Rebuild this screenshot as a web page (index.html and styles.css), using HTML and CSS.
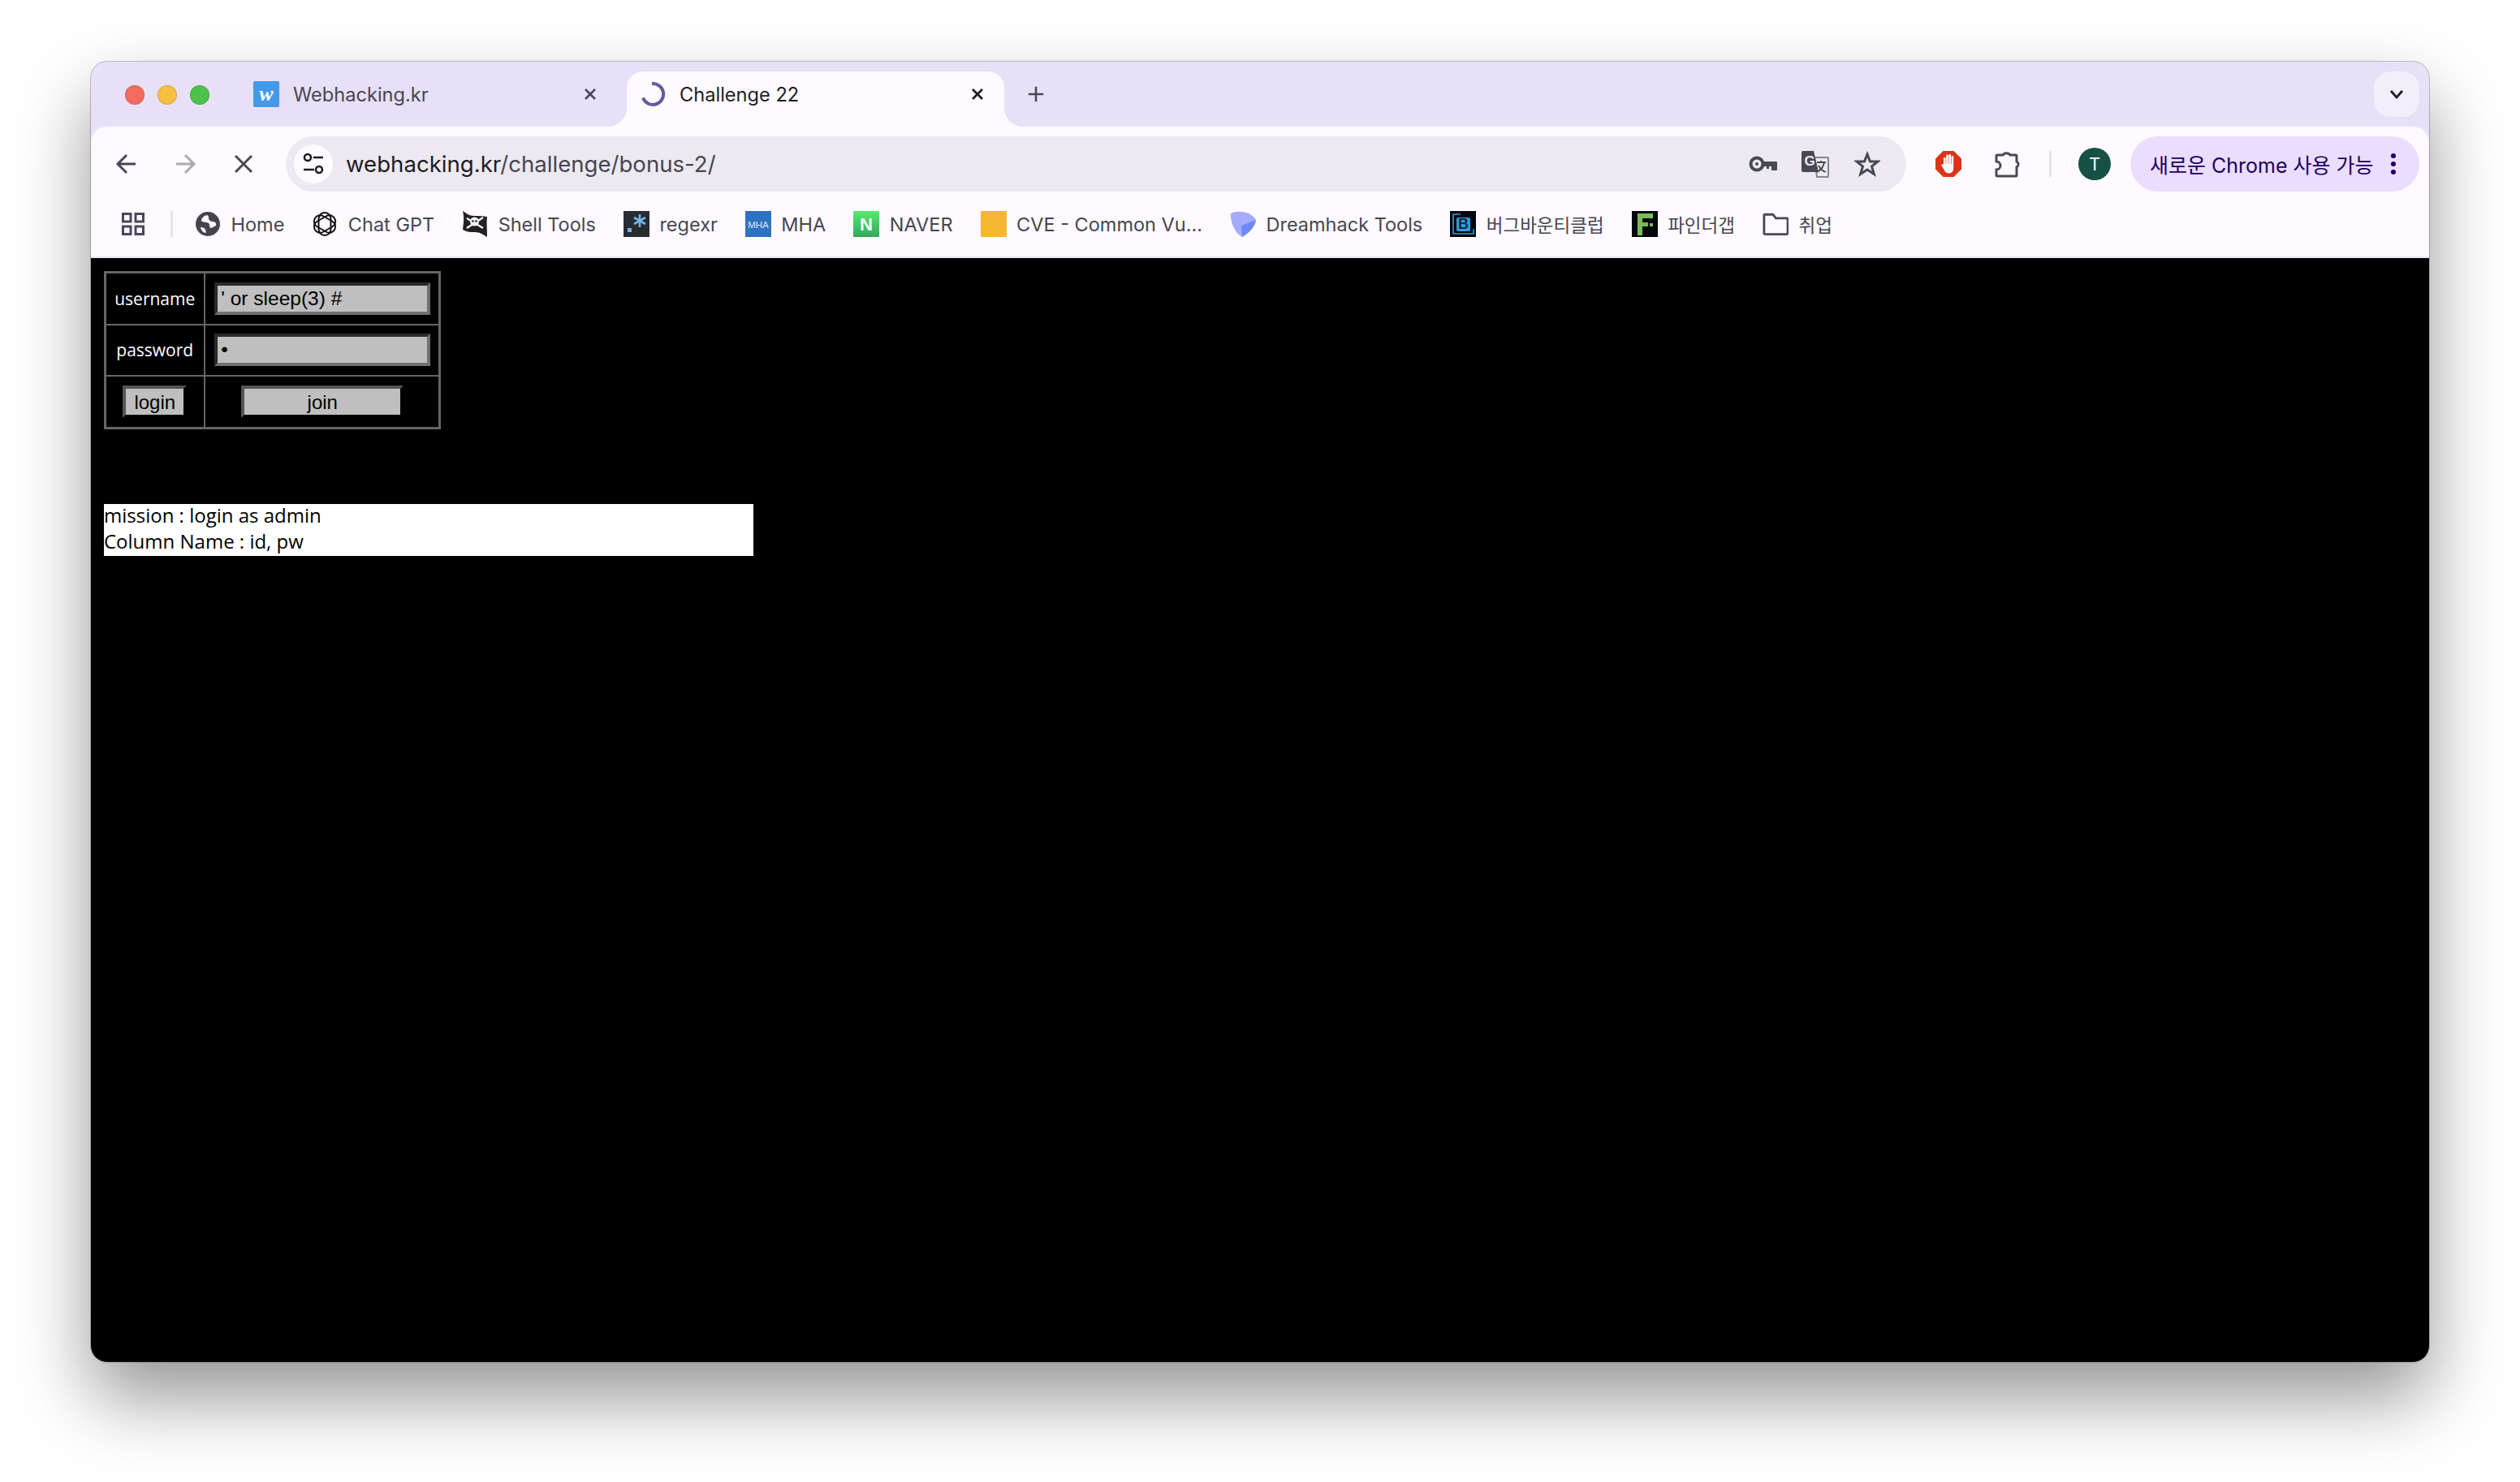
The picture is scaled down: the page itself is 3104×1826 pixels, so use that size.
FILE: index.html
```html
<!DOCTYPE html>
<html lang="ko">
<head>
  <meta charset="UTF-8">
  <title>Challenge 22</title>
  <link rel="stylesheet" href="styles.css">
</head>
<body>
  <div class="window">
    <!-- Tabs -->
    <div class="tabstrip">
      <div class="lights">
        <span class="light light-red"></span>
        <span class="light light-yellow"></span>
        <span class="light light-green"></span>
      </div>
      <div class="tab">
        <svg class="favicon" viewBox="0 0 32 32"><rect y="0" width="32" height="32" rx="2" fill="#4499ea"/><text x="16" y="24" text-anchor="middle" class="fav-w">w</text></svg>
        <span class="tab-title">Webhacking.kr</span>
        <svg class="tab-close" viewBox="0 0 18 18"><path d="M3 3l12 12M15 3L3 15" stroke="#4a4855" stroke-width="2.6" fill="none"/></svg>
      </div>
      <div class="tab tab-active">
        <svg class="favicon" viewBox="0 0 32 32"><path d="M13 3a13 13 0 1 1-11 17.500" stroke="#675a9e" stroke-width="4" fill="none"/></svg>
        <span class="tab-title">Challenge 22</span>
        <svg class="tab-close" viewBox="0 0 18 18"><path d="M3 3l12 12M15 3L3 15" stroke="#1e1c24" stroke-width="2.8" fill="none"/></svg>
      </div>
      <svg class="new-tab" viewBox="0 0 24 24"><path d="M12 2v20M2 12h20" stroke="#4a4855" stroke-width="2.8" fill="none"/></svg>
      <div class="tab-search">
        <svg viewBox="0 0 18 12" class="chevron"><path d="M2 2l7 8 7-8" stroke="#1e1c24" stroke-width="2.8" fill="none"/></svg>
      </div>
    </div>

    <!-- Toolbar -->
    <div class="toolbar">
      <div class="nav-btn">
        <svg viewBox="0 0 28 28" class="nav-icon"><path d="M25 14H4M14 3L3 14l11 11" stroke="#4a4855" stroke-width="3" fill="none"/></svg>
      </div>
      <div class="nav-btn">
        <svg viewBox="0 0 28 28" class="nav-icon"><path d="M3 14h21M14 3l11 11-11 11" stroke="#aaa8b1" stroke-width="3" fill="none"/></svg>
      </div>
      <div class="nav-btn">
        <svg viewBox="0 0 28 28" class="nav-icon"><path d="M4 4l20 20M24 4L4 24" stroke="#4a4855" stroke-width="3" fill="none"/></svg>
      </div>
      <div class="omnibox">
        <div class="site-info">
          <svg viewBox="0 0 28 28" class="tune"><circle cx="7" cy="6" r="4" stroke="#1e1c24" stroke-width="2.6" fill="none"/><path d="M14 6h12M2 21h13" stroke="#1e1c24" stroke-width="2.6"/><circle cx="21" cy="21" r="4" stroke="#1e1c24" stroke-width="2.6" fill="none"/></svg>
        </div>
        <div class="url"><span class="url-host">webhacking.kr</span>/challenge/bonus-2/</div>
        <div class="omni-btn">
          <svg viewBox="0 0 36 20" class="key"><circle cx="10" cy="10" r="7.500" stroke="#4a4855" stroke-width="4" fill="none"/><circle cx="10" cy="10" r="2" fill="#4a4855"/><path d="M17 7h17a1 1 0 0 1 1 1v9a1 1 0 0 1-1 1h-6v-5h-3v3h-3v-3h-5z" fill="#4a4855"/></svg>
        </div>
        <div class="omni-btn">
          <svg viewBox="0 0 34 34" class="translate"><path d="M16 9h16a1 1 0 0 1 1 1v22a1 1 0 0 1-1 1H19z" fill="#ece9f1" stroke="#85838c" stroke-width="2"/><path d="M2 1h13l6 26H2a2 2 0 0 1-2-2V3a2 2 0 0 1 2-2z" fill="#4a4855"/><text x="10" y="19" text-anchor="middle" class="tr-g">G</text><path d="M19 15h11M24 13v2M28 15c-1 6-5 10-9 12M21 19c2 4 5 7 9 8" stroke="#4a4855" stroke-width="1.800" fill="none"/></svg>
        </div>
        <div class="omni-btn">
          <svg viewBox="0 0 32 32" class="star"><path d="M16 4l3.500 9h9.500l-7.500 6 2.800 9.500L16 23l-8.300 5.500 2.800-9.500-7.500-6h9.500z" stroke="#4a4855" stroke-width="3" fill="none"/></svg>
        </div>
      </div>
      <div class="nav-btn nav-first">
        <svg viewBox="0 0 32 32" class="ext-icon"><path d="M9.500 0h13L32 9.500v13L22.500 32h-13L0 22.500v-13z" fill="#dd3418"/><g fill="#fff"><rect x="10" y="8" width="2.600" height="11" rx="1.300"/><rect x="13.200" y="4.500" width="2.600" height="13" rx="1.300"/><rect x="16.400" y="4" width="2.600" height="13" rx="1.300"/><rect x="19.600" y="6" width="2.600" height="12" rx="1.300"/><path d="M10 16h12.200v5c0 4-2 6.500-5.700 6.500-3 0-4.500-1.500-6-4.500l-3-5c-.6-1.300 1-2.300 2-1.200z"/></g></svg>
      </div>
      <div class="nav-btn">
        <svg viewBox="0 0 32 34" class="ext-icon"><path d="M4 6h7a5 4 0 0 1 9 0h7a1 1 0 0 1 1 1v7a4 4 0 0 1 0 7v10a1 1 0 0 1-1 1H4a1 1 0 0 1-1-1v-7a5 5 0 0 0 0-10V7a1 1 0 0 1 1-1z" stroke="#4a4855" stroke-width="3" fill="none"/></svg>
      </div>
      <span class="toolbar-sep"></span>
      <div class="avatar">T</div>
      <div class="update-pill">
        <span class="update-text">새로운 Chrome 사용 가능</span>
        <svg viewBox="0 0 8 28" class="dots"><circle cx="4" cy="4" r="3"/><circle cx="4" cy="14" r="3"/><circle cx="4" cy="24" r="3"/></svg>
      </div>
    </div>

    <!-- Bookmarks -->
    <div class="bookmarks">
      <svg viewBox="0 0 28 28" class="apps"><g fill="none" stroke="#4a4855" stroke-width="3"><rect x="1.500" y="1.500" width="9.500" height="9.500"/><rect x="17" y="1.500" width="9.500" height="9.500"/><rect x="1.500" y="17" width="9.500" height="9.500"/><rect x="17" y="17" width="9.500" height="9.500"/></g></svg>
      <span class="bm-sep"></span>
      <div class="bm-list">
        <div class="bm">
          <svg viewBox="0 0 32 32" class="bm-icon"><circle cx="16" cy="16" r="15" fill="#46444f"/><path d="M15 5c-4 1-7 4-7 7 2 3 6 1 9 3 2 2 0 5 3 6l6-3c1-3-1-5-4-5-3 0-5-2-5-4 0-2 0-3-2-4zM7 20c3 0 5 1 6 3 1 2 0 3 1 4-4 0-6-3-7-7z" fill="#fefaff"/></svg>
          <span>Home</span>
        </div>
        <div class="bm">
          <svg viewBox="0 0 32 32" class="bm-icon"><g fill="none" stroke="#111" stroke-width="2"><rect x="8.500" y="2" width="15" height="28" rx="7.500"/><rect x="8.500" y="2" width="15" height="28" rx="7.500" transform="rotate(60 16 16)"/><rect x="8.500" y="2" width="15" height="28" rx="7.500" transform="rotate(120 16 16)"/></g></svg>
          <span>Chat GPT</span>
        </div>
        <div class="bm">
          <svg viewBox="0 0 32 32" class="bm-icon"><path d="M1 0c5 3 8 6 14 6s10 0 16 1c-1 7 0 15 0 25-5-3-9-6-15-6-5 0-10 0-15-3 1-7 2-15 0-23z" fill="#222"/><circle cx="15.500" cy="13" r="5.500" fill="#f4f4f4"/><path d="M6 9l20 12M26 8L6 21" stroke="#f4f4f4" stroke-width="2.400"/><circle cx="13.500" cy="12.500" r="1.300" fill="#222"/><circle cx="17.500" cy="12.500" r="1.300" fill="#222"/></svg>
          <span>Shell Tools</span>
        </div>
        <div class="bm">
          <svg viewBox="0 0 32 32" class="bm-icon"><rect width="32" height="32" fill="#272c30"/><rect x="5" y="21" width="5" height="5" fill="#70b6ea"/><path d="M20 4v16M13 8l14 8M27 8l-14 8" stroke="#70b6ea" stroke-width="2.600"/></svg>
          <span>regexr</span>
        </div>
        <div class="bm">
          <svg viewBox="0 0 32 32" class="bm-icon"><rect width="32" height="32" fill="#2f72c2"/><text x="16" y="21" text-anchor="middle" class="fav-mha">MHA</text></svg>
          <span>MHA</span>
        </div>
        <div class="bm">
          <svg viewBox="0 0 32 32" class="bm-icon"><defs><linearGradient id="nv" x1="0" y1="0" x2="0" y2="1"><stop offset="0" stop-color="#55ea6e"/><stop offset="1" stop-color="#33a85b"/></linearGradient></defs><rect width="32" height="32" rx="1" fill="url(#nv)"/><text x="16" y="24" text-anchor="middle" class="fav-n">N</text></svg>
          <span>NAVER</span>
        </div>
        <div class="bm">
          <svg viewBox="0 0 32 32" class="bm-icon"><rect width="32" height="32" fill="#f5b731"/></svg>
          <span>CVE - Common Vu...</span>
        </div>
        <div class="bm">
          <svg viewBox="0 0 32 32" class="bm-icon"><path d="M1 3C10-1 25 0 32 11c-1 9-10 17-17 21C7 28 0 14 1 3z" fill="#a4acfb"/><path d="M32 11c-1 9-10 17-17 21l-1-14z" fill="#6f87fb"/></svg>
          <span>Dreamhack Tools</span>
        </div>
        <div class="bm">
          <svg viewBox="0 0 32 32" class="bm-icon"><rect width="32" height="32" fill="#03060a"/><path d="M13 4H4v24h25v-6" stroke="#2d9ee0" stroke-width="1.600" fill="none"/><rect x="8" y="8" width="17" height="17" rx="2" fill="#2d9ee0"/><text x="16.500" y="22" text-anchor="middle" class="fav-b">B</text></svg>
          <span class="bm-ko">버그바운티클럽</span>
        </div>
        <div class="bm">
          <svg viewBox="0 0 32 32" class="bm-icon"><rect width="32" height="32" fill="#03060a"/><path d="M7 3h19v6H13v5h7v5h-7v11H7z" fill="#7dbb5a"/><rect x="22" y="15" width="4" height="4" fill="#7dbb5a"/></svg>
          <span class="bm-ko">파인더갭</span>
        </div>
        <div class="bm">
          <svg viewBox="0 0 34 32" class="bm-icon"><path d="M2 5a1.500 1.500 0 0 1 1.500-1.500h10l4 5h14A1.500 1.500 0 0 1 33 10v18a1.500 1.500 0 0 1-1.500 1.500h-28A1.500 1.500 0 0 1 2 28z" stroke="#4a4855" stroke-width="3" fill="none"/></svg>
          <span class="bm-ko">취업</span>
        </div>
      </div>
    </div>

    <!-- Page -->
    <div class="page">
      <form class="login-form">
        <table class="login-table">
          <tr>
            <td class="cell-label">username</td>
            <td class="cell-field"><input type="text" value="' or sleep(3) #"></td>
          </tr>
          <tr>
            <td class="cell-label">password</td>
            <td class="cell-field"><input type="password" value="a"></td>
          </tr>
          <tr>
            <td class="cell-label"><button type="button" class="btn-login">login</button></td>
            <td class="cell-field"><button type="button" class="btn-join">join</button></td>
          </tr>
        </table>
      </form>
      <div class="mission">
        <div class="mission-text">
          mission : login as admin<br>
          Column Name : id, pw
        </div>
      </div>
    </div>
  </div>
</body>
</html>
```

FILE: styles.css
```css
/* Base */
* {
  box-sizing: border-box;
}

html, body {
  margin: 0;
  height: 1826px;
  overflow: hidden;
  background: #fff;
}

body {
  font-family: Inter, "Noto Sans CJK KR", sans-serif;
  padding: 76px 112px 0;
}

.window {
  height: 1602px;
  display: flex;
  flex-direction: column;
  background: #e8e0f6;
  border-radius: 20px;
  overflow: hidden;
}

body::before {
  content: "";
  position: absolute;
  left: 112px;
  top: 76px;
  width: 2880px;
  height: 1602px;
  border-radius: 20px;
  box-shadow: 0 0 0 1px rgba(0, 0, 0, 0.22), 0 44px 90px rgba(0, 0, 0, 0.42);
}

/* Tab strip */
.tabstrip {
  height: 80px;
  padding: 12px 12px 0 42px;
  display: flex;
  align-items: flex-start;
  flex-shrink: 0;
  position: relative;
}

.lights {
  display: flex;
  gap: 16px;
  margin-top: 17px;
  margin-right: 37px;
}

.light {
  width: 24px;
  height: 24px;
  border-radius: 50%;
  border: 1px solid rgba(0, 0, 0, 0.12);
}

.light-red { background: #f46c5e; }
.light-yellow { background: #f7bf40; }
.light-green { background: #4cc24b; }

.tab {
  width: 465px;
  height: 68px;
  padding: 0 24px 12px 17px;
  display: flex;
  align-items: center;
  color: #474550;
  font-size: 23.6px;
  position: relative;
}

.tab-active {
  margin-left: 12px;
  background: #fefaff;
  color: #1e1c24;
  border-radius: 20px 20px 0 0;
  z-index: 1;
}

.tab-active .tab-title {
  margin-left: 15px;
}

.tab-active .favicon {
  margin-left: 1px;
}

.tab-active::before,
.tab-active::after {
  content: "";
  position: absolute;
  bottom: 0;
  width: 24px;
  height: 24px;
}

.tab-active::before {
  left: -24px;
  background: radial-gradient(circle at 0 0, transparent 24px, #fefaff 24.5px);
}

.tab-active::after {
  right: -24px;
  background: radial-gradient(circle at 100% 0, transparent 24px, #fefaff 24.5px);
}

.favicon {
  width: 32px;
  height: 32px;
  flex-shrink: 0;
}

.tab-title {
  flex: 1;
  margin-left: 17px;
  white-space: nowrap;
}

.tab-close {
  width: 18px;
  height: 18px;
}

.fav-w {
  font-family: "Liberation Serif", serif;
  font-style: italic;
  font-weight: 700;
  font-size: 26px;
  fill: #fff;
}

.new-tab {
  width: 22px;
  height: 22px;
  margin: 17px 0 0 28px;
}

.tab-search {
  width: 56px;
  height: 56px;
  margin-left: auto;
  background: #f3edfc;
  border-radius: 20px;
  display: flex;
  align-items: center;
  justify-content: center;
}

.chevron {
  width: 18px;
  height: 12px;
}

/* Toolbar */
.toolbar {
  height: 92px;
  padding: 12px 12px 12px 8px;
  background: #fefaff;
  border-radius: 20px 20px 0 0;
  display: flex;
  align-items: center;
  flex-shrink: 0;
}

.nav-btn {
  width: 72px;
  height: 68px;
  display: flex;
  align-items: center;
  justify-content: center;
  flex-shrink: 0;
}

.nav-first {
  margin-left: 16px;
}

.nav-icon {
  width: 28px;
  height: 28px;
}

.omnibox {
  width: 1996px;
  height: 68px;
  margin-left: 16px;
  padding: 0 16px 0 10px;
  background: #ece9f1;
  border-radius: 34px;
  display: flex;
  align-items: center;
  flex-shrink: 0;
}

.site-info {
  width: 48px;
  height: 48px;
  background: #fefaff;
  border-radius: 50%;
  display: flex;
  align-items: center;
  justify-content: center;
}

.tune {
  width: 28px;
  height: 28px;
}

.url {
  flex: 1;
  margin-left: 16px;
  font-size: 27.6px;
  color: #474550;
}

.url-host {
  color: #1e1c24;
}

.omni-btn {
  width: 64px;
  display: flex;
  justify-content: center;
}

.key { width: 36px; height: 20px; }
.translate { width: 34px; height: 34px; }
.star { width: 32px; height: 32px; }

.tr-g {
  font-family: "Liberation Sans", sans-serif;
  font-weight: 700;
  font-size: 17px;
  fill: #ece9f1;
}

.ext-icon {
  width: 32px;
  height: 34px;
}

.toolbar-sep {
  width: 3px;
  height: 32px;
  margin-left: 16px;
  background: #e8e0f6;
  flex-shrink: 0;
}

.avatar {
  width: 40px;
  height: 40px;
  margin-left: 33px;
  background: #175044;
  color: #fff;
  border-radius: 50%;
  font-size: 22px;
  display: flex;
  align-items: center;
  justify-content: center;
  flex-shrink: 0;
}

.update-pill {
  width: 356px;
  height: 68px;
  margin-left: 24px;
  padding-left: 24px;
  background: #eaddff;
  border-radius: 34px;
  color: #21005d;
  font-size: 25px;
  display: flex;
  align-items: center;
  flex-shrink: 0;
}

.update-text {
  width: 272px;
  white-space: nowrap;
}

.dots {
  width: 8px;
  height: 28px;
  margin-left: 24px;
  fill: #21005d;
}

/* Bookmarks */
.bookmarks {
  height: 70px;
  padding: 0 0 12px 38px;
  background: #fefaff;
  border-bottom: 2px solid #ece6f2;
  display: flex;
  align-items: center;
  flex-shrink: 0;
}

.apps {
  width: 28px;
  height: 28px;
}

.bm-sep {
  width: 3px;
  height: 32px;
  margin-left: 32px;
  background: #e8e0f6;
}

.bm-list {
  display: flex;
  align-items: center;
  gap: 34px;
  margin-left: 27px;
}

.bm {
  display: flex;
  align-items: center;
  gap: 12.5px;
  font-size: 23.5px;
  color: #474550;
  white-space: nowrap;
}

.bm-icon {
  width: 32px;
  height: 32px;
  flex-shrink: 0;
}

.bm-ko {
  font-size: 22.5px;
}

.fav-mha {
  font-family: "Liberation Sans", sans-serif;
  font-size: 11.5px;
  fill: #dce9fa;
}

.fav-n {
  font-family: "Liberation Sans", sans-serif;
  font-weight: 700;
  font-size: 22px;
  fill: #fff;
}

.fav-b {
  font-family: "Liberation Sans", sans-serif;
  font-weight: 700;
  font-size: 18px;
  fill: #0b2a44;
}

/* Page */
.page {
  flex: 1;
  padding: 16px;
  background: #000;
  color: #fff;
  font-family: "Open Sans", sans-serif;
  font-size: 24px;
}

.login-form {
  margin: 0;
}

.login-table {
  width: 415px;
  height: 195px;
  border-collapse: collapse;
  border: 3px solid #666;
}

.login-table td {
  border: 2px solid #666;
  padding: 0;
  text-align: center;
}

.login-table .cell-field {
  padding-left: 2px;
}

.cell-label {
  width: 122px;
  font-size: 21px;
}

.login-table input {
  width: 266px;
  height: 40px;
  padding: 0 4px;
  display: block;
  margin: 0 auto;
  background: #bfbfbf;
  color: #000;
  border: 4px solid;
  border-color: #2a2a2a #707070 #707070 #2a2a2a;
  font-family: "Liberation Sans", sans-serif;
  font-size: 24.5px;
}

.login-table button {
  height: 40px;
  padding: 2px 0 0;
  display: block;
  margin: 0 auto;
  background: #bfbfbf;
  color: #000;
  border: 4px solid;
  border-color: #555 #000 #000 #555;
  font-family: "Liberation Sans", sans-serif;
  font-size: 24px;
}

.btn-login { width: 79px; }
.btn-join { width: 200px; }

.mission {
  display: flow-root;
  width: 800px;
  height: 64px;
  margin-top: 92px;
  background: #fff;
  color: #000;
  line-height: 32px;
}

.mission-text {
  margin-top: -2px;
}
```
